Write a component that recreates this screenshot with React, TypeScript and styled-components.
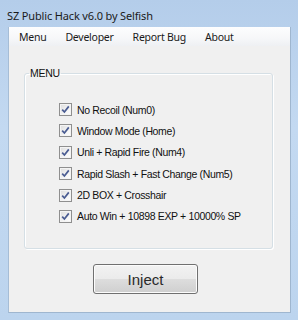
import styled, { createGlobalStyle } from "styled-components";

const GlobalStyle = createGlobalStyle`
  html, body {
    margin: 0;
    padding: 0;
    background: #bcd5ef;
  }
`;

const Window = styled.div`
  width: 298px;
  height: 320px;
  display: flex;
  flex-direction: column;
  box-sizing: border-box;
  background: linear-gradient(to bottom, #b4cdea 0%, #c3d9f1 40%, #bcd4ee 100%);
  padding: 0 7px 7px 8px;
`;

const TitleBar = styled.div`
  height: 27px;
  box-sizing: border-box;
  padding-top: 3px;
  display: flex;
  align-items: center;
  margin-left: -1px;
  font-family: "Noto Sans", "Open Sans", sans-serif;
  font-size: 11px;
  color: #1a1a1a;
  letter-spacing: -0.15px;
`;

const Client = styled.div`
  flex: 1;
  display: flex;
  flex-direction: column;
  background: #f0f0f0;
  border: 1px solid #9fb6cf;
  border-top: none;
  border-left-color: #a6bdd6;
`;

const MenuBar = styled.div`
  height: 19px;
  display: flex;
  align-items: center;
  gap: 19px;
  padding-left: 10px;
  background: linear-gradient(to bottom, #fdfdfe 0%, #f6f7f9 60%, #eef0f3 100%);
  font-family: "Noto Sans", "Open Sans", sans-serif;
  font-size: 10.5px;
  color: #1a1a1a;
`;

const MenuItem = styled.span`
  letter-spacing: -0.25px;
`;

const Body = styled.div`
  display: flex;
  flex-direction: column;
  padding: 21px 0 0 15px;
`;

const Group = styled.fieldset`
  margin: 0;
  width: 249px;
  height: 182px;
  box-sizing: border-box;
  border: 1px solid #d5dfe5;
  border-radius: 3px;
  box-shadow: inset 1px 1px 0 #ffffff, 1px 1px 0 #ffffff;
  padding: 0;
`;

const Legend = styled.legend`
  padding: 0 1px;
  margin-left: 4px;
  font-family: "Liberation Sans", Arial, sans-serif;
  font-size: 10.5px;
  letter-spacing: -0.3px;
  color: #111;
`;

const Options = styled.div`
  display: flex;
  flex-direction: column;
  gap: 8.4px;
  padding: 24px 0 0 34px;
`;

const Row = styled.label`
  display: flex;
  align-items: center;
  gap: 5px;
  height: 13px;
  font-family: "Liberation Sans", Arial, sans-serif;
  font-size: 10.5px;
  letter-spacing: -0.35px;
  color: #111;
`;

const Box = styled.span`
  width: 13px;
  height: 13px;
  box-sizing: border-box;
  border: 1px solid #8f8f8f;
  background: linear-gradient(135deg, #dcdcdc 0%, #f4f4f4 60%, #ffffff 100%);
  box-shadow: inset 0 0 0 1px #f4f4f4;
  display: flex;
  align-items: center;
  justify-content: center;
`;

const ButtonRow = styled.div`
  padding: 15px 0 0 69px;
`;

const Button = styled.button`
  width: 105px;
  height: 30px;
  box-sizing: border-box;
  border: 1px solid #707070;
  border-radius: 3px;
  background: linear-gradient(to bottom, #f2f2f2 0%, #ebebeb 49%, #dddddd 51%, #cfcfcf 100%);
  box-shadow: inset 0 0 0 1px #fcfcfc;
  font-family: "Liberation Sans", Arial, sans-serif;
  font-size: 15px;
  color: #2a2a2a;
  padding: 0;
`;

const Check = () => (
  <svg width="9" height="9" viewBox="0 0 9 9">
    <path d="M1.2 4.6 L3.4 7 L7.8 1.4" fill="none" stroke="#4a5c92" strokeWidth="1.7" />
  </svg>
);

const options = [
  "No Recoil (Num0)",
  "Window Mode (Home)",
  "Unli + Rapid Fire (Num4)",
  "Rapid Slash + Fast Change (Num5)",
  "2D BOX + Crosshair",
  "Auto Win + 10898 EXP + 10000% SP",
];

export default function App() {
  return (
    <>
      <GlobalStyle />
      <Window>
        <TitleBar>SZ Public Hack v6.0 by Selfish</TitleBar>
        <Client>
          <MenuBar>
            <MenuItem>Menu</MenuItem>
            <MenuItem>Developer</MenuItem>
            <MenuItem>Report Bug</MenuItem>
            <MenuItem>About</MenuItem>
          </MenuBar>
          <Body>
            <Group>
              <Legend>MENU</Legend>
              <Options>
                {options.map((o) => (
                  <Row key={o}>
                    <Box>
                      <Check />
                    </Box>
                    {o}
                  </Row>
                ))}
              </Options>
            </Group>
            <ButtonRow>
              <Button>Inject</Button>
            </ButtonRow>
          </Body>
        </Client>
      </Window>
    </>
  );
}
